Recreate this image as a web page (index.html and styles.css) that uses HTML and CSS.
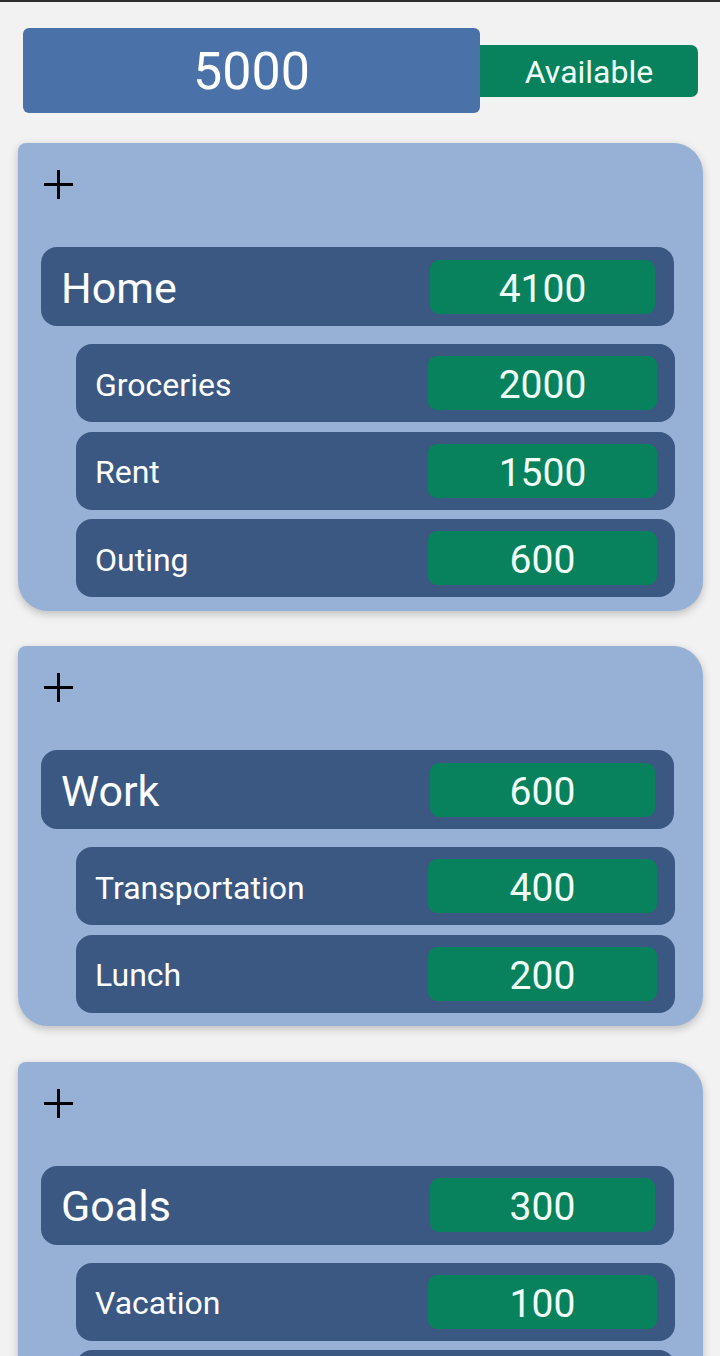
FILE: index.html
```html
<!DOCTYPE html>
<html lang="en">
<head>
<meta charset="utf-8">
<title>Budget</title>
<link rel="stylesheet" href="styles.css">
</head>
<body>
<div class="topline"></div>
<header class="summary">
  <div class="total">5000</div>
  <div class="avail">Available</div>
</header>

<main class="cards">
  <section class="card">
    <div class="add"><svg class="plus" viewBox="0 0 32 32" width="32" height="32"><path d="M16 1v30M1 16h30" stroke="#000" stroke-width="3" fill="none"/></svg></div>
    <div class="row cat"><span class="label">Home</span><span class="value">4100</span></div>
    <div class="subs">
      <div class="row sub"><span class="label">Groceries</span><span class="value">2000</span></div>
      <div class="row sub"><span class="label">Rent</span><span class="value">1500</span></div>
      <div class="row sub"><span class="label">Outing</span><span class="value">600</span></div>
    </div>
  </section>

  <section class="card">
    <div class="add"><svg class="plus" viewBox="0 0 32 32" width="32" height="32"><path d="M16 1v30M1 16h30" stroke="#000" stroke-width="3" fill="none"/></svg></div>
    <div class="row cat"><span class="label">Work</span><span class="value">600</span></div>
    <div class="subs">
      <div class="row sub"><span class="label">Transportation</span><span class="value">400</span></div>
      <div class="row sub"><span class="label">Lunch</span><span class="value">200</span></div>
    </div>
  </section>

  <section class="card">
    <div class="add"><svg class="plus" viewBox="0 0 32 32" width="32" height="32"><path d="M16 1v30M1 16h30" stroke="#000" stroke-width="3" fill="none"/></svg></div>
    <div class="row cat"><span class="label">Goals</span><span class="value">300</span></div>
    <div class="subs">
      <div class="row sub"><span class="label">Vacation</span><span class="value">100</span></div>
      <div class="row sub"><span class="label"></span><span class="value"></span></div>
    </div>
  </section>
</main>
</body>
</html>
```

FILE: styles.css
```css
* { box-sizing: border-box; }

html, body {
  margin: 0;
  padding: 0;
  background: #f2f2f2;
  font-family: Roboto, "Noto Sans", sans-serif;
  color: #ffffff;
}

body {
  overflow: hidden;
  height: 1356px;
}

.topline {
  height: 2px;
  background: #2e2e2e;
}

.summary {
  display: flex;
  align-items: center;
  padding: 26px 0 0 23px;
}

.total {
  width: 457px;
  height: 85px;
  background: #4a72a9;
  border-radius: 6px;
  display: flex;
  align-items: center;
  justify-content: center;
  font-size: 52px;
  line-height: 1;
  padding-top: 2px;
}

.avail {
  width: 218px;
  height: 52px;
  background: #07825c;
  border-radius: 0 7px 7px 0;
  display: flex;
  align-items: center;
  justify-content: center;
  font-size: 32px;
  line-height: 1;
  color: #f2fff8;
  padding-top: 2px;
}

.cards {
  display: flex;
  flex-direction: column;
  gap: 35.5px;
  padding: 30px 17px 0 18px;
}

.card {
  background: #97b0d6;
  border-radius: 8px 30px 30px 30px;
  box-shadow: 0 3px 8px rgba(0, 0, 0, 0.22);
  padding-bottom: 13.5px;
}

.add {
  height: 104px;
  padding: 26px 0 0 25px;
}

.plus {
  display: block;
  width: 31px;
  height: 31px;
}

.row {
  display: flex;
  align-items: center;
  justify-content: space-between;
  background: #3a5882;
  border-radius: 16px;
}

.cat {
  height: 79px;
  margin: 0 29px 0 23px;
  padding: 0 19px 0 20px;
}

.cat .label {
  font-size: 43px;
}

.cat .value {
  width: 225px;
}

.subs {
  display: flex;
  flex-direction: column;
  gap: 9.5px;
  margin: 18px 28px 0 58px;
}

.sub {
  height: 78px;
  padding: 0 18px 0 19px;
}

.sub .label {
  font-size: 32px;
}

.sub .value {
  width: 229px;
}

.label {
  line-height: 1;
  padding-top: 3px;
}

.value {
  height: 54px;
  background: #07825c;
  border-radius: 9px;
  display: flex;
  align-items: center;
  justify-content: center;
  font-size: 39px;
  line-height: 1;
  color: #f2fff8;
  padding-top: 5px;
}
```
